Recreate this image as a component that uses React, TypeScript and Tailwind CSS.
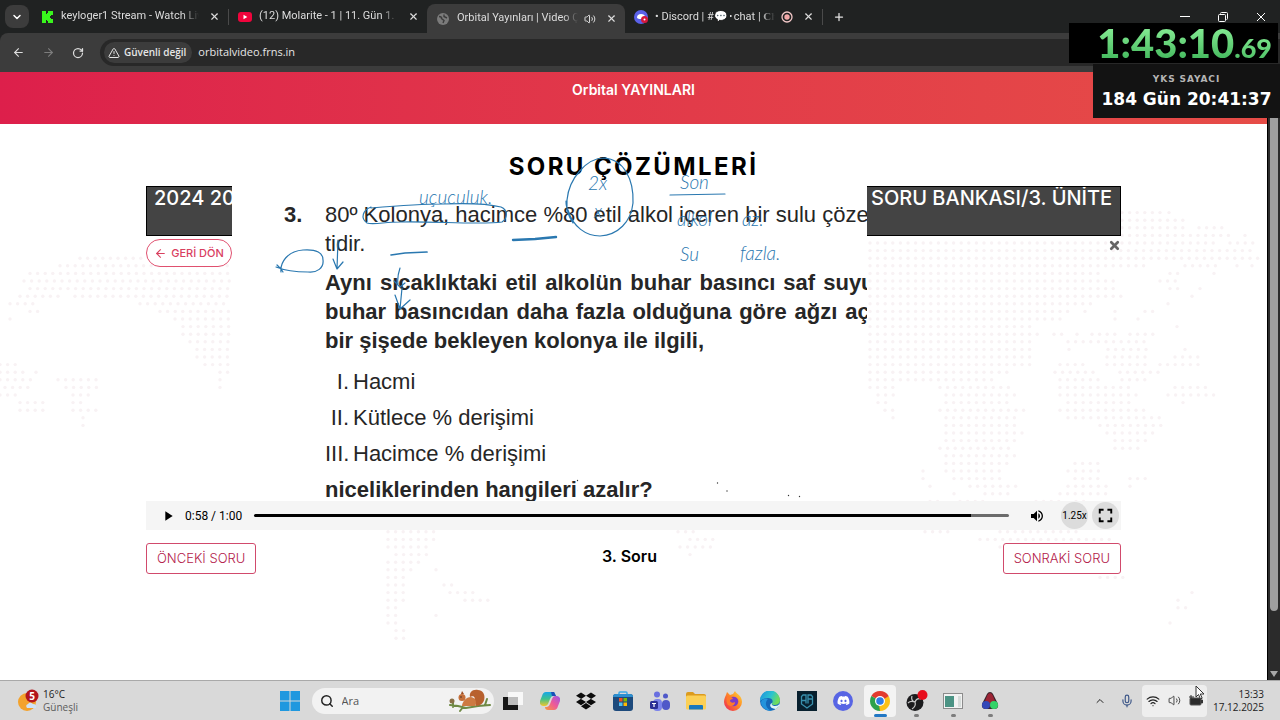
import type { ReactNode } from "react";
import { ArrowLeft, ArrowRight, ChevronDown, ChevronUp, Mic, Plus, RotateCw, Search, TriangleAlert, Volume2, Wifi, X } from "lucide-react";
import { FaDiscord, FaDropbox } from "react-icons/fa";
import { MdFullscreen, MdPlayArrow, MdVolumeUp } from "react-icons/md";

const STEP = 7.6;

// [row, from x, to x, ...] runs of dots, one row every STEP pixels
const MAP_RUNS: number[][] = [
  [11, 1122, 1160, 1169, 1170],
  [12, 1122, 1184],
  [13, 1122, 1184, 1199, 1222],
  [14, 1122, 1230, 1245, 1246],
  [15, 870, 1108, 1122, 1215, 1230, 1255],
  [16, 870, 1255],
  [17, 80, 146, 870, 1262],
  [18, 60, 231, 870, 1145, 1185, 1222, 1237, 1238, 1252, 1253],
  [19, 30, 231, 870, 1100, 1170, 1178, 1214, 1215],
  [20, 24, 231, 870, 1115, 1160, 1180],
  [21, 30, 231, 870, 1115, 1170, 1185, 1200, 1201],
  [22, 20, 60, 75, 231, 870, 1125, 1192, 1193],
  [23, 10, 40, 140, 231, 870, 1093, 1168, 1169],
  [24, 30, 45, 160, 231, 870, 1070, 1085, 1086, 1115, 1116, 1145, 1155],
  [25, 10, 11, 175, 231, 870, 1063, 1115, 1116, 1138, 1139],
  [26, 183, 231, 870, 1033, 1177, 1178],
  [27, 183, 231, 870, 1040, 1054, 1062, 1077, 1078, 1092, 1116, 1130, 1153],
  [28, 190, 231, 870, 1033, 1068, 1148],
  [29, 197, 231, 870, 1033, 1069, 1070, 1108, 1148, 1185, 1192],
  [30, 197, 231, 870, 1033, 1107, 1150, 1175, 1205],
  [31, 0, 20, 205, 231, 870, 1033, 1060, 1090, 1107, 1150, 1160, 1205],
  [32, 0, 28, 36, 37, 220, 231, 870, 1010, 1055, 1098, 1120, 1160],
  [33, 0, 36, 58, 96, 220, 221, 870, 995, 1060, 1105, 1122, 1150],
  [34, 5, 28, 66, 100, 220, 221, 870, 900, 940, 1010, 1060, 1130, 1175, 1212],
  [35, 0, 20, 73, 90, 878, 900, 946, 1018, 1060, 1140, 1168, 1218],
  [36, 20, 45, 73, 85, 878, 893, 946, 1010, 1068, 1135, 1183, 1184],
  [37, 20, 45, 73, 100, 885, 893, 940, 1025, 1060, 1150],
  [38, 83, 84, 893, 894, 946, 1018, 1068, 1160],
  [39, 83, 84, 946, 1018, 1100, 1165],
  [40, 946, 1025, 1107, 1160],
  [41, 946, 1018, 1115, 1150],
  [42, 940, 1010, 1115, 1140],
  [43, 946, 1018],
  [44, 946, 1010, 1075, 1098],
  [45, 923, 924, 946, 1003, 1068, 1105],
  [46, 923, 924, 954, 1003, 1075, 1105, 1130, 1150],
  [47, 930, 931, 970, 1018, 1068, 1110, 1130, 1131],
  [48, 954, 955, 985, 1010, 1060, 1110],
  [49, 930, 945, 960, 990, 1036, 1062, 1076, 1084],
  [50, 908, 909, 946, 947, 1030, 1062, 1092, 1093],
  [51, 916, 925, 970, 971, 1040, 1060],
  [52, 904, 905, 922, 945, 1000, 1050],
  [53, 388, 436, 678, 700, 925, 950, 1000, 1080],
  [54, 388, 440, 690, 718, 980, 1115],
  [55, 388, 432, 680, 712, 1000, 1118],
  [56, 396, 432, 690, 691, 1040, 1070],
  [57, 388, 424],
  [58, 388, 418, 436, 437],
  [59, 388, 410, 1100, 1125],
  [60, 388, 410, 444, 458],
  [61, 388, 410, 450, 478, 1192, 1193],
  [62, 388, 410, 465, 490, 1178, 1179],
  [63, 388, 402, 1178, 1186],
  [64, 388, 402, 436, 437],
  [65, 388, 402, 1170, 1171],
  [66, 396, 404],
  [67, 396, 404],
];

function mapDots() {
  const dots: { x: number; y: number }[] = [];
  MAP_RUNS.forEach(([row, ...runs]) => {
    for (let i = 0; i < runs.length; i += 2) {
      for (let x = runs[i]; x <= runs[i + 1]; x += STEP) dots.push({ x, y: row * STEP + 57 });
    }
  });
  return dots;
}

function WorldMap() {
  return (
    <svg className="absolute left-0 top-0" width="1268" height="608" viewBox="0 72 1268 608" fill="#f8f2f4" aria-hidden="true">
      {mapDots().map((d, i) => (
        <circle key={i} cx={d.x} cy={d.y + 72} r="1.7" />
      ))}
    </svg>
  );
}

interface TabProps {
  icon: ReactNode;
  title: ReactNode;
  width: string;
  active?: boolean;
  extra?: ReactNode;
}

function Tab({ icon, title, width, active, extra }: TabProps) {
  return (
    <div
      className={`${width} flex h-full shrink-0 items-center gap-[6px] pl-2 pr-1 font-['Roboto','Noto_Sans',sans-serif] text-[11px] text-[#dcdcdc] ${
        active ? "rounded-t-lg bg-[#3c3c3c]" : ""
      }`}
    >
      <span className="flex w-4 shrink-0 justify-center">{icon}</span>
      <span className="min-w-0 flex-1 overflow-hidden whitespace-nowrap [mask-image:linear-gradient(to_right,black_88%,transparent)]">
        {title}
      </span>
      {extra}
      <button aria-label="Sekmeyi kapat" className="shrink-0 px-1">
        <X size={11} strokeWidth={2.5} />
      </button>
    </div>
  );
}

function BrowserChrome() {
  return (
    <header className="shrink-0 bg-[#202222] font-['Open_Sans','Noto_Sans',sans-serif]">
      <div className="flex h-[33px] items-center">
        <button aria-label="Sekme ara" className="ml-[5px] mr-[2px] flex h-[23px] w-6 items-center justify-center rounded-lg bg-[#3c3c3c] text-white">
          <ChevronDown size={12} strokeWidth={3} />
        </button>
        <Tab
          width="w-[197px]"
          title="keyloger1 Stream - Watch Live on"
          icon={
            <svg width="11" height="12" viewBox="0 0 11 12" fill="#39f51d">
              <path d="M0 0h4v3h1V2h1V0h5v4H9v1H8v2h1v1h2v4H6v-2H5V9H4v3H0z" />
            </svg>
          }
        />
        <span className="h-4 w-px bg-[#4a4a4a]" />
        <Tab
          width="w-[198px]"
          title="(12) Molarite - 1 | 11. Gün 1. Ders"
          icon={
            <svg width="14" height="10" viewBox="0 0 14 10">
              <rect width="14" height="10" rx="3" fill="#f0043c" />
              <path d="M5.500 2.800v4.400L9.300 5z" fill="#fff" />
            </svg>
          }
        />
        <div className="flex h-[29px] self-end">
          <Tab
            active
            width="w-[198px]"
            title="Orbital Yayınları | Video Çözüm"
            extra={<Volume2 size={12} className="shrink-0" />}
            icon={
              <svg width="12" height="12" viewBox="0 0 12 12">
                <circle cx="6" cy="6" r="6" fill="#7b7b7b" />
                <path d="M2 3.500c2 0 3 1 2.500 2L7 7.500 6 10M7 1.500v2L10 5" stroke="#3c3c3c" strokeWidth="1.400" fill="none" />
              </svg>
            }
          />
        </div>
        <Tab
          width="w-[197px]"
          title={
            <>
              • Discord | #💬･chat | <b className="font-['Liberation_Serif',serif]">Chill</b>
            </>
          }
          icon={
            <svg width="14" height="14" viewBox="0 0 14 14">
              <circle cx="7" cy="7" r="7" fill="#5a61e8" />
              <path d="M3 8c0-3 1.500-4 4-4s4 1 4 3l-3 2H5z" fill="#fff" />
              <circle cx="10.500" cy="9.500" r="3.500" fill="#d5173b" />
              <circle cx="10.500" cy="9.500" r="1" fill="#fff" />
            </svg>
          }
          extra={
            <svg width="12" height="12" viewBox="0 0 12 12" className="shrink-0">
              <circle cx="6" cy="6" r="5" fill="none" stroke="#f3c8c8" strokeWidth="1.300" />
              <circle cx="6" cy="6" r="2.700" fill="#f3a9a9" />
            </svg>
          }
        />
        <span className="h-4 w-px bg-[#4a4a4a]" />
        <button aria-label="Yeni sekme" className="ml-[10px] text-[#e4e4e4]">
          <Plus size={12} strokeWidth={2.5} />
        </button>
        <div className="ml-auto mr-[14px] flex items-center gap-7 text-white">
          <button aria-label="Simge durumuna küçült">
            <svg width="10" height="10" viewBox="0 0 10 10" stroke="currentColor"><path d="M0 4.500h10" /></svg>
          </button>
          <button aria-label="Önceki boyut">
            <svg width="10" height="10" viewBox="0 0 10 10" stroke="currentColor" fill="none">
              <rect x=".5" y="2.500" width="7" height="7" rx="1" />
              <path d="M2.500 1.500q0-1 1-1h5q1 0 1 1v5q0 1-1 1" />
            </svg>
          </button>
          <button aria-label="Kapat">
            <svg width="10" height="10" viewBox="0 0 10 10" stroke="currentColor"><path d="M1 1l8 8M9 1L1 9" /></svg>
          </button>
        </div>
      </div>
      <div className="flex h-[39px] items-center rounded-tl-lg bg-[#3c3c3c]">
        <div className="flex w-[100px] items-center justify-between pl-3 pr-4 text-[#dedede]">
          <button aria-label="Geri"><ArrowLeft size={13} /></button>
          <button aria-label="İleri" className="text-[#7d7d7d]"><ArrowRight size={13} /></button>
          <button aria-label="Yenile"><RotateCw size={12} strokeWidth={2.5} /></button>
        </div>
        <div className="flex h-[27px] flex-1 items-center rounded-l-full bg-[#282828] pl-1">
          <span className="flex h-[21px] items-center gap-1 rounded-full bg-[#3c3c3c] px-1 pr-[6px] text-[10px] font-semibold text-[#e6e6e6]">
            <TriangleAlert size={12} />
            Güvenli değil
          </span>
          <input
            aria-label="Adres çubuğu"
            defaultValue="orbitalvideo.frns.in"
            className="ml-[6px] w-60 bg-transparent text-[11px] text-[#e6e6e6] outline-none"
          />
        </div>
      </div>
    </header>
  );
}

function Timers() {
  return (
    <div className="absolute right-0 top-[23px] z-10 flex flex-col items-end">
      <div className="mr-[2px] flex h-10 w-[209px] items-baseline justify-end bg-black pr-[6px] font-['Lato',sans-serif] font-black leading-10">
        <span className="bg-gradient-to-b from-[#8ef39c] to-[#3bb458] bg-clip-text text-[40px] text-transparent">1:43:10</span>
        <span className="bg-gradient-to-b from-[#8ef39c] to-[#3bb458] bg-clip-text text-[27px] text-transparent">.69</span>
      </div>
      <div className="mt-px flex h-[54px] w-[187px] flex-col items-center justify-center bg-[#131313] font-['DejaVu_Sans',sans-serif]">
        <span className="text-[9px] font-bold leading-4 tracking-widest text-[#b4b4b4]">YKS SAYACI</span>
        <span className="whitespace-nowrap text-[17px] font-bold leading-6 text-white">184 Gün 20:41:37</span>
      </div>
    </div>
  );
}

function Ink() {
  return (
    <svg
      className="pointer-events-none absolute left-0 top-0 overflow-visible"
      width="635"
      height="315"
      viewBox="232 186 635 315"
      fill="none"
      stroke="#2a78b0"
      strokeWidth="1.200"
      strokeLinecap="round"
      strokeLinejoin="round"
    >
      <path d="M566 201q0 6 2 9c5 17 18 26 32 26 18-1 31-14 33-33 1-23-9-44-29-45-17 0-35 20-37 42-1 11 2 17 6 23" />
      <path d="M371 208c24-2 50-4 72-4 24-1 46 0 58 3 7 3 7 11 1 15-20 3-70-1-102 0-15 0-27 3-33 1-7-5-4-13 4-16" />
      <path d="M277 265c4 4 4 3 6 7M281 272c-1-9 6-21 22-22 14-1 20 3 20 10 1 8-6 13-15 12-10 0-22-1-32-5" />
      <path d="M338 240l-1 29M333 259l4 10 6-7M400 268c-2 6-3 10-2 16M394 281l6 6 5-4M402 288l-2 21M395 295l5 14 10-9" />
      <path d="M391 255l14-2 22-1" strokeWidth="1.700" />
      <path d="M513 240l22-1 21-2" strokeWidth="2.400" />
      <path d="M670 195l55-1" />
      <g fill="#2a78b0" stroke="none" fontFamily="Lato, sans-serif" fontStyle="italic" fontWeight="300" fontSize="19">
        <text x="419" y="204">uçuculuk.</text>
        <text x="588" y="190">2x</text>
        <text x="594" y="218">x</text>
        <text x="680" y="189">Son</text>
        <text x="677" y="226">alkol</text>
        <text x="742" y="226">az.</text>
        <text x="680" y="261">Su</text>
        <text x="740" y="260">fazla.</text>
      </g>
      <g fill="#333" stroke="none">
        <circle cx="717.500" cy="483" r=".7" />
        <circle cx="727" cy="491" r=".7" />
        <circle cx="788.500" cy="495.500" r=".7" />
        <circle cx="799.500" cy="496.500" r=".7" />
        <circle cx="577.500" cy="480.500" r=".7" />
      </g>
    </svg>
  );
}

const choices = [
  { no: "I.", text: "Hacmi" },
  { no: "II.", text: "Kütlece % derişimi" },
  { no: "III.", text: "Hacimce % derişimi" },
];

function Question() {
  return (
    <figure className="relative h-full bg-white font-['Liberation_Sans',Arial,sans-serif] text-[22px] leading-[29px] text-[#262626]">
      <div className="flex h-full overflow-hidden pl-[52px] pt-[14px]">
        <span className="w-[41px] shrink-0 font-bold">3.</span>
        <div className="shrink-0 whitespace-nowrap">
          <p>80º Kolonya, hacimce %80 etil alkol içeren bir sulu çözel-<br />tidir.</p>
          <div className="mt-[10px] w-[563px] font-bold">
            <p className="whitespace-normal [text-align-last:justify]">Aynı sıcaklıktaki etil alkolün buhar basıncı saf suyun</p>
            <p className="whitespace-normal [text-align-last:justify]">buhar basıncıdan daha fazla olduğuna göre ağzı açık</p>
            <p>bir şişede bekleyen kolonya ile ilgili,</p>
          </div>
          <ul className="mt-[9px] leading-9">
            {choices.map((c) => (
              <li key={c.no} className="flex gap-1">
                <span className="w-6 text-right">{c.no}</span>
                {c.text}
              </li>
            ))}
          </ul>
          <p className="font-bold leading-9">niceliklerinden hangileri azalır?</p>
        </div>
      </div>
      <Ink />
    </figure>
  );
}

function PlayerControls() {
  return (
    <div className="relative flex h-[29px] items-center bg-[#f5f5f5] pl-[14px] pr-[2px] font-['Roboto',sans-serif] text-[12px] text-black">
      <button aria-label="Oynat"><MdPlayArrow size={16} /></button>
      <span className="ml-[9px] whitespace-nowrap">0:58 / 1:00</span>
      <input
        type="range"
        aria-label="Konum"
        min={0}
        max={60}
        defaultValue={58}
        className="ml-3 h-[3px] min-w-0 flex-1 appearance-none rounded-full bg-[linear-gradient(to_right,black_95%,#6b6b6b_95%)] [&::-webkit-slider-thumb]:appearance-none"
      />
      <button aria-label="Ses" className="ml-5 mr-4"><MdVolumeUp size={16} /></button>
      <button className="flex h-[27px] w-[27px] items-center justify-center rounded-full bg-[#dcdcdc] text-[10px]">1.25x</button>
      <button aria-label="Tam ekran" className="ml-1 flex h-[27px] w-[27px] items-center justify-center rounded-full bg-[#dcdcdc]">
        <MdFullscreen size={23} />
      </button>
    </div>
  );
}

function Page() {
  return (
    <div className="flex min-h-0 flex-1">
      <main className="relative min-w-0 flex-1 overflow-hidden bg-white font-['Inter',sans-serif]">
        <WorldMap />
        <div className="relative h-[52px] bg-gradient-to-r from-[#dd1f4b] to-[#e64c47] pt-2 text-center text-[14px] font-semibold leading-5 text-white">
          Orbital YAYINLARI
        </div>
        <div className="relative mx-auto w-full max-w-[975px]">
          <h1 className="pt-6 text-center text-[24px] font-bold leading-[38px] tracking-widest text-black">SORU ÇÖZÜMLERİ</h1>
          <div className="grid grid-cols-[86px_minmax(0,1fr)_254px]">
            <div>
              <div className="h-[50px] overflow-hidden whitespace-nowrap border-y border-l border-black bg-[#444] pl-[7px] text-[20px] font-medium leading-[22px] text-white">
                2024 2025
              </div>
              <button className="mt-[3px] flex h-7 w-full items-center justify-center gap-1 rounded-full border border-[#e0506f] bg-white text-[11px] font-medium text-[#d9405f]">
                <ArrowLeft size={13} />
                GERİ DÖN
              </button>
            </div>
            <div className="h-[315px]">
              <Question />
            </div>
            <div>
              <div className="h-[50px] overflow-hidden whitespace-nowrap border-y border-r border-black bg-[#444] pl-1 text-[20px] font-medium leading-[22px] text-white">
                SORU BANKASI/3. ÜNİTE
              </div>
              <button aria-label="Kapat" className="ml-auto mt-[3px] block text-[#666]">
                <X size={13} strokeWidth={5} />
              </button>
            </div>
          </div>
          <PlayerControls />
          <div className="mt-[13px] flex items-start justify-between">
            <button className="h-[31px] rounded-[3px] border border-[#d14a6c] bg-white px-[10px] text-[13px] font-light text-[#b3194a]">ÖNCEKİ SORU</button>
            <span className="text-[16px] font-semibold leading-[26px] text-black">3. Soru</span>
            <button className="h-[31px] rounded-[3px] border border-[#d14a6c] bg-white px-[10px] text-[13px] font-light text-[#b3194a]">SONRAKİ SORU</button>
          </div>
        </div>
      </main>
      <div className="flex w-[13px] shrink-0 flex-col items-center justify-between border-l border-black bg-[#2b2b2b]">
        <span className="h-[539px] w-2 rounded-full bg-[#9f9f9f]" />
        <svg width="8" height="12" viewBox="0 0 8 12" fill="#a8a8a8"><path d="M0 3h8L4 9z" /></svg>
      </div>
    </div>
  );
}

interface App {
  name: string;
  icon: ReactNode;
  active?: boolean;
  running?: boolean;
}

const apps: App[] = [
  {
    name: "Görev görünümü",
    icon: (
      <svg width="20" height="20" viewBox="0 0 20 20">
        <rect x="0" y="6" width="15" height="13" fill="#161616" />
        <rect x="5" y="1" width="15" height="13" fill="#f8f8f8" />
        <rect x="5" y="6" width="10" height="8" fill="#bdbdbd" />
      </svg>
    ),
  },
  {
    name: "Copilot",
    icon: (
      <svg width="20" height="20" viewBox="0 0 20 20">
        <defs>
          <linearGradient id="cpa" x1="0" y1="0" x2="0" y2="1">
            <stop stopColor="#17a6e8" /><stop offset=".5" stopColor="#3fc28c" /><stop offset="1" stopColor="#f2c62c" />
          </linearGradient>
          <linearGradient id="cpb" x1="1" y1="0" x2="0" y2="1">
            <stop stopColor="#9a58e8" /><stop offset=".5" stopColor="#ee5a98" /><stop offset="1" stopColor="#f79a3c" />
          </linearGradient>
        </defs>
        <path d="M6 1h7q2 0 2 2l1 2h-3q-2 0-3 3l-2 5q-1 2-3 2H3q-4-1-3-5L2 5q1-4 4-4z" fill="url(#cpa)" />
        <path d="M11 1h3l2 4h-4z" fill="#1d4fb8" />
        <path d="M14 19H8q-3 0-3-3h2q2 0 3-3l2-5q1-3 3-3h2q4 1 3 5l-2 5q-1 4-4 4z" fill="url(#cpb)" />
      </svg>
    ),
  },
  { name: "Dropbox", icon: <FaDropbox size={20} color="#0c0c0c" /> },
  {
    name: "Microsoft Store",
    icon: (
      <svg width="20" height="20" viewBox="0 0 20 20">
        <path d="M6 4V2q0-1 1-1h6q1 0 1 1v2" fill="none" stroke="#3aa9e8" strokeWidth="1.500" />
        <rect x="0" y="3" width="20" height="17" rx="3" fill="#1d4a7c" />
        <path d="M0 6q0-3 3-3h14q3 0 3 3z" fill="#2d8fd0" />
        <path d="M6 7h3.500v3.500H6z" fill="#f25022" />
        <path d="M10.500 7H14v3.500h-3.500z" fill="#7fba00" />
        <path d="M6 11.500h3.500V15H6z" fill="#4fc0f5" />
        <path d="M10.500 11.500H14V15h-3.500z" fill="#ffb900" />
      </svg>
    ),
  },
  {
    name: "Teams",
    icon: (
      <svg width="20" height="20" viewBox="0 0 20 20">
        <circle cx="7" cy="3.500" r="3" fill="#6a70e0" />
        <circle cx="15.500" cy="5" r="2.500" fill="#5059c9" />
        <rect x="3" y="8" width="9" height="12" rx="4" fill="#7b83eb" />
        <rect x="12" y="9" width="8" height="10" rx="4" fill="#5058c8" />
        <rect x="0" y="10" width="8" height="8" rx="1.500" fill="#2b2f96" />
        <path d="M2 12.500h4M4 12.500V16" stroke="#fff" strokeWidth="1.200" />
      </svg>
    ),
  },
  {
    name: "Dosya Gezgini",
    icon: (
      <svg width="20" height="20" viewBox="0 0 20 20">
        <path d="M0 3q0-2 2-2h5l2 2h9q2 0 2 2v4H0z" fill="#dc9b1e" />
        <rect y="4.500" width="20" height="14" rx="1.500" fill="#fbd056" />
        <path d="M4 14h12q1 0 1 1v3.500H3V15q0-1 1-1z" fill="#1878bd" />
      </svg>
    ),
  },
  {
    name: "Firefox",
    icon: (
      <svg width="20" height="20" viewBox="0 0 20 20">
        <defs>
          <linearGradient id="ffx" x1="1" y1="0" x2="0" y2="1">
            <stop stopColor="#ffdd3c" /><stop offset=".45" stopColor="#ff8a26" /><stop offset="1" stopColor="#ec1f5b" />
          </linearGradient>
        </defs>
        <path d="M3 4l1-3 3 3 3-1 2-3c1 3 7 4 7 11a9 9 0 11-18 0c0-3 1-5 2-7z" fill="url(#ffx)" />
        <circle cx="10.500" cy="10.500" r="4.800" fill="#7b3cc8" />
        <path d="M4 6c3-1 5 0 6 2-2 0-3 1-3 2 1 2 3 2 5 1 0 4-4 5-7 3-1-1-2-5-1-8z" fill="#ff7a2b" />
      </svg>
    ),
  },
  {
    name: "Edge",
    icon: (
      <svg width="20" height="20" viewBox="0 0 20 20">
        <defs>
          <linearGradient id="edg" x1="0" y1="0" x2="1" y2=".4">
            <stop stopColor="#1c8fe0" /><stop offset=".6" stopColor="#2cc3cf" /><stop offset="1" stopColor="#6fdc5c" />
          </linearGradient>
        </defs>
        <circle cx="10" cy="10" r="10" fill="#1668b8" />
        <path d="M0 10A10 10 0 0120 9c0 4-3 5-6 5-2 0-3-1-2-2 2-3-1-5-4-5-4 0-7 2-8 3z" fill="url(#edg)" />
        <path d="M12 12c-1 2 1 3 3 3 2 0 4-1 4-2l1 1-4 4c-5 0-8-4-4-6z" fill="#dff4f8" />
        <path d="M8 8c-4 4-2 10 4 12-6 0-11-4-11-9 1-3 4-4 7-3z" fill="#2493dc" />
      </svg>
    ),
  },
  {
    name: "Oyun",
    icon: (
      <svg width="20" height="20" viewBox="0 0 20 20">
        <rect width="20" height="20" fill="#08202e" />
        <path d="M9 12.500V4H6L4.500 5.500V13L10 17l5.500-4V5.500L14 4h-3v8.500M5 9.500h4M11 8h4.500" stroke="#3990ad" strokeWidth="1.300" fill="none" />
      </svg>
    ),
  },
  {
    name: "Discord",
    icon: (
      <span className="flex h-5 w-5 items-center justify-center rounded-full bg-[#5865e4] text-white">
        <FaDiscord size={13} />
      </span>
    ),
  },
  {
    name: "Chrome",
    active: true,
    icon: (
      <svg width="20" height="20" viewBox="0 0 20 20">
        <path d="M10 10L1.340 5A10 10 0 0118.660 5z" fill="#e33b2e" />
        <path d="M10 10V20A10 10 0 011.340 5z" fill="#2da14c" />
        <path d="M10 10L18.660 5A10 10 0 0110 20z" fill="#fbc116" />
        <path d="M10 5.200h8.700L14 8z" fill="#e33b2e" />
        <path d="M14.200 12.500L10 20l-1-6z" fill="#fbc116" />
        <circle cx="10" cy="10" r="5" fill="#fff" />
        <circle cx="10" cy="10" r="3.800" fill="#2f7de4" />
      </svg>
    ),
  },
  {
    name: "OBS",
    running: true,
    icon: (
      <svg width="22" height="22" viewBox="0 0 22 22">
        <circle cx="9" cy="12.500" r="8.500" fill="#1b1b1d" />
        <g fill="none" stroke="#c7c7c7" strokeWidth="1.200">
          <path d="M6 6c-1 3 0 5 3 6M15 9c-3-1-5 0-6 3M9 12c1 3 0 5-3 7M2 13c2-2 4-2 7-1" />
        </g>
        <circle cx="16.500" cy="5" r="5" fill="#e80d1c" />
      </svg>
    ),
  },
  {
    name: "Pencere",
    running: true,
    icon: (
      <svg width="20" height="16" viewBox="0 0 20 16">
        <rect x=".5" y=".5" width="19" height="15" fill="#f2f2f2" stroke="#8c8c8c" />
        <rect x="2" y="3" width="9" height="11" fill="#4b9384" />
        <path d="M15 3h3v11h-3z" fill="#d6dcda" />
      </svg>
    ),
  },
  {
    name: "Renkler",
    running: true,
    icon: (
      <svg width="18" height="18" viewBox="0 0 18 18">
        <path d="M9 0q2 0 3 2l5 10q1 5-4 5H5q-5 0-4-5L6 2q1-2 3-2z" fill="#37232b" />
        <path d="M9 1q2 0 3 3l2 5-5 3-5-3 2-5q1-3 3-3z" fill="#9c2435" />
        <circle cx="5" cy="13" r="4" fill="#3348b8" />
        <circle cx="13" cy="13" r="4" fill="#34d368" />
      </svg>
    ),
  },
];

function Taskbar() {
  return (
    <footer className="grid h-10 shrink-0 grid-cols-[1fr_auto_1fr] items-center border-t border-[#a9a9a9] bg-[#d9d9d9] font-['Open_Sans','Noto_Sans',sans-serif] text-[10px] leading-[13px] text-[#222]">
      <div className="flex items-center gap-1 pl-[17px]">
        <svg width="22" height="24" viewBox="0 0 22 24">
          <circle cx="10" cy="13" r="9" fill="#f3a22c" />
          <path d="M10 19q-2-3 1-4 2-3 5 0 4 0 3 4z" fill="#cfe2f5" />
          <circle cx="15" cy="7" r="6.500" fill="#b3151c" />
          <text x="15" y="11" fontSize="10" fontWeight="700" fill="#fff" textAnchor="middle">5</text>
        </svg>
        <p>
          16°C
          <br />
          <span className="text-[#5c5c5c]">Güneşli</span>
        </p>
      </div>
      <div className="flex items-center">
        <button aria-label="Başlat" className="flex w-9 justify-center">
          <svg width="20" height="20" viewBox="0 0 20 20" fill="#1f98df">
            <path d="M0 0h9.500v9.500H0zM10.500 0H20v9.500h-9.500zM0 10.500h9.500V20H0zM10.500 10.500H20V20h-9.500z" />
          </svg>
        </button>
        <label className="ml-1 flex h-[26px] w-[182px] items-center gap-2 rounded-full bg-[#f2f2f2] pl-2">
          <Search size={14} strokeWidth={2.5} />
          <input aria-label="Ara" placeholder="Ara" className="min-w-0 flex-1 bg-transparent text-[11px] outline-none placeholder:text-[#555]" />
          <svg width="44" height="24" viewBox="0 0 44 24" className="mr-[2px] shrink-0">
            <path d="M2 16l8 1 8 2 12-2 12-1M5 18v-6M12 22l3-4M37 16l2-6" stroke="#6f8a45" strokeWidth="2" fill="none" strokeLinecap="round" />
            <circle cx="4" cy="12" r="2.500" fill="#8a7048" />
            <path d="M28 17c11 0 11-16 2-16-6-1-9 3-8 7 3-2 6 0 4 3z" fill="#b8612e" />
            <path d="M14 17c0-4 4-9 9-9 5 1 6 5 4 9z" fill="#cd7a42" />
            <circle cx="14" cy="8.500" r="3.500" fill="#c56f3a" />
            <path d="M13 5l1-3 2 3z" fill="#9c4c22" />
            <circle cx="13" cy="8" r=".7" fill="#222" />
          </svg>
        </label>
        <nav className="ml-px flex w-[514px]">
          {apps.map((app) => (
            <button
              key={app.name}
              aria-label={app.name}
              className={`relative mx-[2px] flex h-8 flex-1 items-center justify-center rounded-sm ${app.active ? "bg-[#f3f3f3]" : ""}`}
            >
              {app.icon}
              {app.active && <span className="absolute bottom-0 h-[3px] w-[13px] rounded-full bg-[#2277c4]" />}
              {app.running && <span className="absolute bottom-0 h-[3px] w-[5px] rounded-full bg-[#7d7d7d]" />}
            </button>
          ))}
        </nav>
      </div>
      <div className="flex items-center justify-end pr-4">
        <button aria-label="Gizli simgeler" className="mr-[14px]"><ChevronUp size={12} /></button>
        <button aria-label="Mikrofon" className="mr-2 text-[#3c5688]"><Mic size={14} /></button>
        <div className="relative flex h-8 w-[65px] items-center justify-around rounded-sm bg-[#eee]">
          <Wifi size={14} />
          <Volume2 size={13} strokeWidth={1.5} />
          <svg width="14" height="12" viewBox="0 0 14 12">
            <rect x="1" y="3" width="11" height="7" rx="1" fill="#2b2b2b" stroke="#555" />
            <path d="M12.500 5h1v3h-1zM2 0v4M0 2h5" fill="#333" stroke="#333" />
          </svg>
          <svg className="absolute left-[53px] top-0" width="10" height="15" viewBox="0 0 10 15">
            <path d="M1 1v11l2.500-2.500L5.500 14l1.700-.8L5.300 9H9z" fill="#fff" stroke="#333" />
          </svg>
        </div>
        <p className="ml-[6px] text-right">
          13:33
          <br />
          17.12.2025
        </p>
      </div>
    </footer>
  );
}

export default function App() {
  return (
    <div className="relative flex h-screen flex-col overflow-hidden">
      <BrowserChrome />
      <Page />
      <Taskbar />
      <Timers />
    </div>
  );
}
